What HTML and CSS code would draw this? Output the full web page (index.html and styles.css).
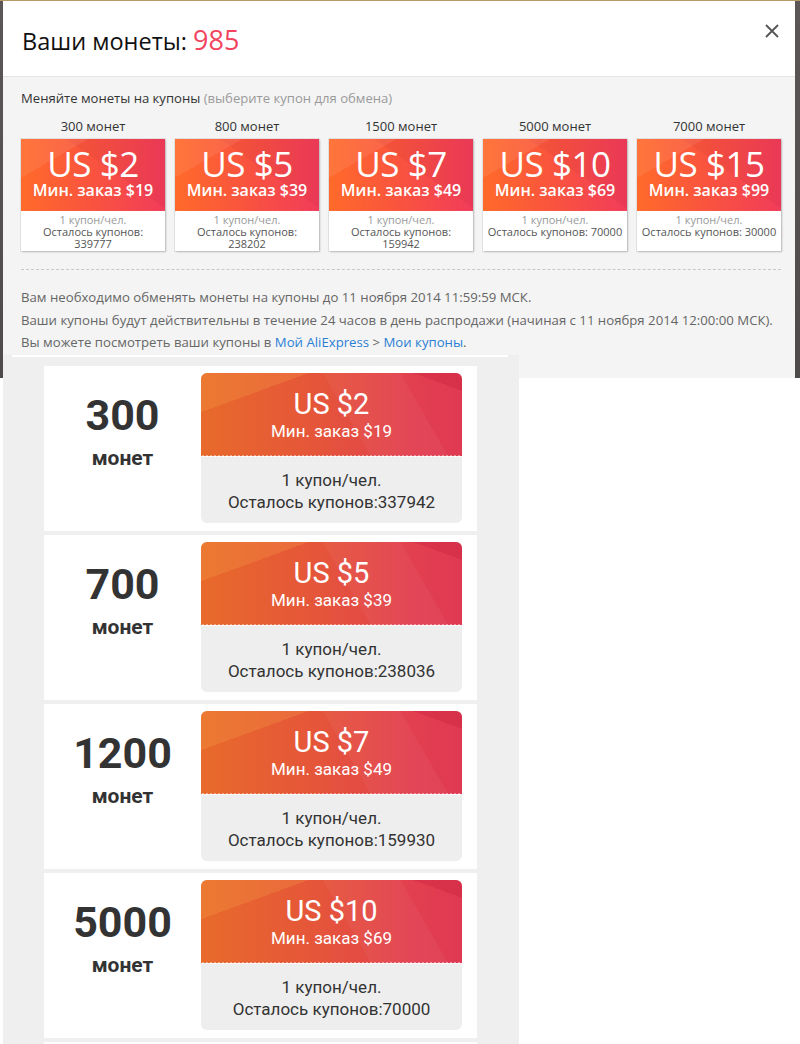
FILE: index.html
```html
<!DOCTYPE html>
<html lang="ru">
	<head>
		<meta charset="UTF-8" />
		<meta name="viewport" content="width=device-width, initial-scale=1.0" />
		<title>Ваши монеты</title>
		<link rel="stylesheet" href="styles.css">
	</head>
	<body>
		<div class="backdrop">
			<div class="modal">
				<div class="modal-head">
					<h2>Ваши монеты: <span class="coins">985</span></h2>
					<span class="close">
						<svg width="14" height="14" viewBox="0 0 14 14"><path d="M1 1L13 13M13 1L1 13" stroke="#555" stroke-width="1.8" fill="none"/></svg>
					</span>
				</div>
				<div class="modal-body">
					<p class="intro">Меняйте монеты на купоны <span>(выберите купон для обмена)</span></p>
					<div class="offers">
						<div class="offer">
							<div class="offer-cost">300 монет</div>
							<div class="ticket">
								<div class="ticket-face">
									<div class="ticket-value">US $2</div>
									<div class="ticket-min">Мин. заказ $19</div>
								</div>
								<div class="ticket-info">
									<div class="per">1 купон/чел.</div>
									<div class="left">Осталось купонов:<br>339777</div>
								</div>
							</div>
						</div>
						<div class="offer">
							<div class="offer-cost">800 монет</div>
							<div class="ticket">
								<div class="ticket-face">
									<div class="ticket-value">US $5</div>
									<div class="ticket-min">Мин. заказ $39</div>
								</div>
								<div class="ticket-info">
									<div class="per">1 купон/чел.</div>
									<div class="left">Осталось купонов:<br>238202</div>
								</div>
							</div>
						</div>
						<div class="offer">
							<div class="offer-cost">1500 монет</div>
							<div class="ticket">
								<div class="ticket-face">
									<div class="ticket-value">US $7</div>
									<div class="ticket-min">Мин. заказ $49</div>
								</div>
								<div class="ticket-info">
									<div class="per">1 купон/чел.</div>
									<div class="left">Осталось купонов:<br>159942</div>
								</div>
							</div>
						</div>
						<div class="offer">
							<div class="offer-cost">5000 монет</div>
							<div class="ticket">
								<div class="ticket-face">
									<div class="ticket-value">US $10</div>
									<div class="ticket-min">Мин. заказ $69</div>
								</div>
								<div class="ticket-info">
									<div class="per">1 купон/чел.</div>
									<div class="left">Осталось купонов: 70000</div>
								</div>
							</div>
						</div>
						<div class="offer">
							<div class="offer-cost">7000 монет</div>
							<div class="ticket">
								<div class="ticket-face">
									<div class="ticket-value">US $15</div>
									<div class="ticket-min">Мин. заказ $99</div>
								</div>
								<div class="ticket-info">
									<div class="per">1 купон/чел.</div>
									<div class="left">Осталось купонов: 30000</div>
								</div>
							</div>
						</div>
					</div>
					<div class="notes">
						<p>Вам необходимо обменять монеты на купоны до 11 ноября 2014 11:59:59 МСК.</p>
						<p>Ваши купоны будут действительны в течение 24 часов в день распродажи (начиная с 11 ноября 2014 12:00:00 МСК).</p>
						<p>Вы можете посмотреть ваши купоны в <a href="#">Мой AliExpress</a> &gt; <a href="#">Мои купоны</a>.</p>
					</div>
				</div>
			</div>
		</div>

		<div class="phone">
			<div class="phone-top"></div>
			<div class="list">
				<div class="card">
					<div class="price"><div class="num">300</div><div class="unit">монет</div></div>
					<div class="coupon">
						<div class="coupon-face"><div class="coupon-value">US $2</div><div class="coupon-min">Мин. заказ $19</div></div>
						<div class="coupon-info">1 купон/чел.<br>Осталось купонов:337942</div>
					</div>
				</div>
				<div class="card">
					<div class="price"><div class="num">700</div><div class="unit">монет</div></div>
					<div class="coupon">
						<div class="coupon-face"><div class="coupon-value">US $5</div><div class="coupon-min">Мин. заказ $39</div></div>
						<div class="coupon-info">1 купон/чел.<br>Осталось купонов:238036</div>
					</div>
				</div>
				<div class="card">
					<div class="price"><div class="num">1200</div><div class="unit">монет</div></div>
					<div class="coupon">
						<div class="coupon-face"><div class="coupon-value">US $7</div><div class="coupon-min">Мин. заказ $49</div></div>
						<div class="coupon-info">1 купон/чел.<br>Осталось купонов:159930</div>
					</div>
				</div>
				<div class="card">
					<div class="price"><div class="num">5000</div><div class="unit">монет</div></div>
					<div class="coupon">
						<div class="coupon-face"><div class="coupon-value">US $10</div><div class="coupon-min">Мин. заказ $69</div></div>
						<div class="coupon-info">1 купон/чел.<br>Осталось купонов:70000</div>
					</div>
				</div>
				<div class="card">
					<div class="price"><div class="num">7000</div><div class="unit">монет</div></div>
					<div class="coupon">
						<div class="coupon-face"><div class="coupon-value">US $15</div><div class="coupon-min">Мин. заказ $99</div></div>
						<div class="coupon-info">1 купон/чел.<br>Осталось купонов:30000</div>
					</div>
				</div>
			</div>
		</div>
	</body>
</html>
```

FILE: styles.css
```css
body {
	margin: 0;
	background: #fff;
	font-family: "Open Sans", Arial, sans-serif;
	color: #333;
	overflow: hidden;
}

.backdrop {
	height: 378px;
	box-sizing: border-box;
	padding: 1px 5px 0 3px;
	background: linear-gradient(180deg, #b89a6a 0, #b89a6a 1px, #5d5656 1px, #4f4a4a 100%);
}

.modal {
	height: 377px;
	background: #f4f4f4;
}

.modal-head {
	display: flex;
	justify-content: space-between;
	height: 75px;
	padding: 0 16px 0 19px;
	background: #fff;
	border-bottom: 1px solid #e5e5e5;
}

.modal-head h2 {
	margin: 0;
	font-size: 23.5px;
	font-weight: 400;
	line-height: 77px;
	color: #111;
}

.coins {
	color: #f3445f;
	font-size: 27px;
}

.close {
	margin-top: 20px;
	width: 14px;
	height: 14px;
}

.modal-body {
	padding: 12px 14px 0 18px;
}

.intro {
	margin: 0;
	font-size: 13.1px;
	line-height: 18px;
	color: #333;
}

.intro span {
	color: #9a9a9a;
}

.offers {
	display: flex;
	gap: 10px;
	margin-top: 11px;
	padding-bottom: 18px;
	border-bottom: 1px dashed #c8c8c8;
}

.offer {
	width: 144px;
	text-align: center;
}

.offer-cost {
	font-size: 13px;
	line-height: 16px;
	color: #333;
	margin-bottom: 5px;
}

.ticket {
	background: #fff;
	box-shadow: 1px 1px 2px rgba(0, 0, 0, 0.2), 0 0 0 1px #e3e3e3;
}

.ticket-face {
	position: relative;
	height: 72px;
	box-sizing: border-box;
	padding-top: 8px;
	color: #fff;
	background:
		linear-gradient(150deg, rgba(255, 255, 255, 0.08) 0, rgba(255, 255, 255, 0.08) 25%, transparent 25%),
		linear-gradient(35deg, transparent 60%, rgba(120, 0, 30, 0.06) 60%),
		linear-gradient(90deg, #ff6a2a 0%, #f9533f 50%, #f13c5a 100%);
}

.ticket-face::after {
	content: "";
	position: absolute;
	left: 0;
	right: 0;
	bottom: -1px;
	height: 3px;
	background: radial-gradient(circle at 50% 100%, #fff 1.2px, transparent 1.6px) repeat-x;
	background-size: 4px 3px;
}

.ticket-value {
	font-size: 35px;
	line-height: 34px;
	letter-spacing: -0.5px;
}

.ticket-min {
	font-size: 16px;
	font-weight: 600;
	line-height: 14px;
	margin-top: 2px;
}

.ticket-info {
	height: 40px;
	padding-top: 3px;
	box-sizing: border-box;
	font-size: 11px;
	line-height: 12px;
}

.per {
	color: #9a9a9a;
}

.left {
	color: #555;
}

.notes {
	padding-top: 16px;
}

.notes p {
	margin: 0;
	font-size: 13.2px;
	line-height: 22.5px;
	color: #666;
}

.notes a {
	color: #2b7fd4;
	text-decoration: none;
}

/* mobile list */

.phone {
	position: relative;
	width: 516px;
	margin: -23px 0 0 3px;
	background: #efefef;
	font-family: Roboto, Arial, sans-serif;
}

.phone-top {
	height: 2px;
	margin: 0 11px 0 9px;
	background: #fff;
}

.list {
	display: flex;
	flex-direction: column;
	gap: 4px;
	padding: 9px 42px 0 41px;
}

.card {
	display: flex;
	align-items: flex-start;
	padding: 7px 15px 8px 0;
	background: #fff;
}

.price {
	width: 157px;
	padding-top: 17px;
	text-align: center;
	color: #333;
	font-weight: 700;
}

.num {
	font-size: 43px;
	line-height: 50px;
}

.unit {
	font-size: 21px;
	line-height: 26px;
	margin-top: 5px;
}

.coupon {
	width: 261px;
	height: 150px;
	border-radius: 6px;
	overflow: hidden;
	background: #eee;
	text-align: center;
}

.coupon-face {
	position: relative;
	height: 83px;
	color: #fff;
	box-sizing: border-box;
	padding-top: 15px;
	background:
		linear-gradient(160deg, rgba(255, 190, 80, 0.18) 0, rgba(255, 190, 80, 0.18) 22%, transparent 22%),
		linear-gradient(60deg, transparent 55%, rgba(255, 255, 255, 0.04) 55%, rgba(255, 255, 255, 0.04) 80%, transparent 80%),
		linear-gradient(200deg, rgba(190, 20, 50, 0.25) 0, rgba(190, 20, 50, 0.25) 10%, transparent 10%),
		linear-gradient(90deg, #e86a2b 0%, #e5553a 45%, #e2404f 80%, #df3953 100%);
}

.coupon-face::after {
	content: "";
	position: absolute;
	left: 0;
	right: 0;
	bottom: -1px;
	height: 3px;
	background: radial-gradient(circle at 50% 100%, #fff 1.3px, transparent 1.8px) repeat-x;
	background-size: 4px 3px;
}

.coupon-value {
	font-size: 29px;
	line-height: 32px;
}

.coupon-min {
	font-size: 17px;
	line-height: 22px;
}

.coupon-info {
	padding-top: 13px;
	font-size: 17px;
	line-height: 22px;
	color: #333;
}
```
